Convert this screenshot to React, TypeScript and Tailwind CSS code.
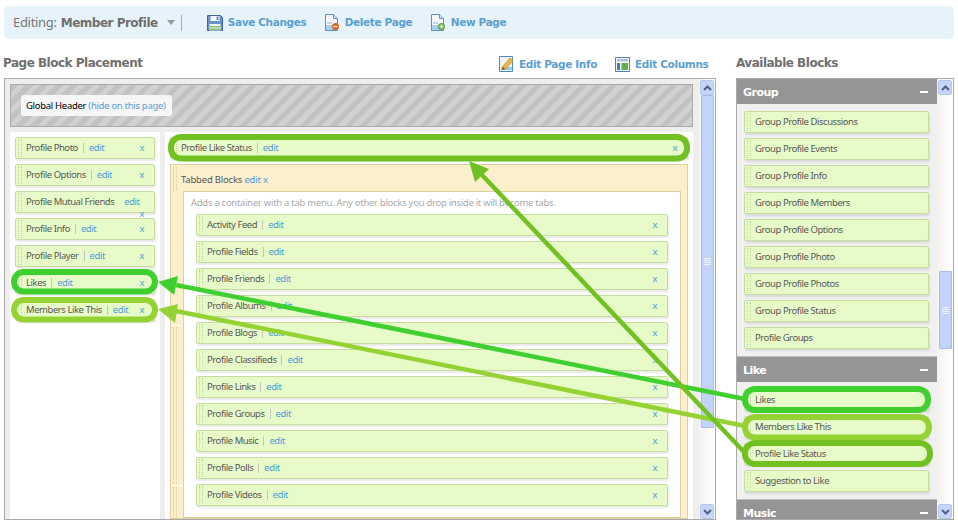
import React from "react";

const leftBlocks = ["Profile Photo", "Profile Options", "Profile Mutual Friends", "Profile Info", "Profile Player", "Likes", "Members Like This"];
const tabBlocks = ["Activity Feed", "Profile Fields", "Profile Friends", "Profile Albums", "Profile Blogs", "Profile Classifieds", "Profile Links", "Profile Groups", "Profile Music", "Profile Polls", "Profile Videos"];
const groupBlocks = ["Group Profile Discussions", "Group Profile Events", "Group Profile Info", "Group Profile Members", "Group Profile Options", "Group Profile Photo", "Group Profile Photos", "Group Profile Status", "Profile Groups"];
const likeBlocks = ["Likes", "Members Like This", "Profile Like Status", "Suggestion to Like"];

function Block({ name, lowX, noEdit }: { name: string; lowX?: boolean; noEdit?: boolean }) {
  return (
    <div className="flex h-[22px] shrink-0 items-center rounded-[2px] border border-[#c6dd9e] bg-[#e7fbc8] pl-[2px] pr-[10px] shadow-[1px_2px_2px_rgba(0,0,0,0.09)]">
      <div className="h-[18px] w-[4px] shrink-0 border-x border-dotted border-[#c3d6a0]" />
      <span className="mb-px ml-[4px] whitespace-nowrap text-[#585858]">{name}</span>
      {!noEdit && (
        <>
          <span className="ml-[5px] h-[10px] w-px bg-[#c4c4c4]" />
          <a className="mb-px ml-[5px] text-[#4f9bd9]">edit</a>
          <a className={lowX ? "mb-px ml-auto translate-y-[12px] text-[#4f9bd9]" : "mb-px ml-auto text-[#4f9bd9]"}>x</a>
        </>
      )}
    </div>
  );
}

function Scrollbar({ offset }: { offset: string }) {
  return (
    <div className="flex w-[16px] shrink-0 flex-col items-center bg-gradient-to-r from-[#f4f3ee] to-white pt-px">
      <ScrollButton up />
      <div className={offset + " flex w-[13px] items-center justify-center rounded-[1px] border border-[#a5bdec] bg-[#c3d4fc]"}>
        <svg width="7" height="7" viewBox="0 0 7 7">
          <path d="M0 .5h7M0 2.5h7M0 4.5h7M0 6.5h7" stroke="#eef3ff" strokeWidth="1" />
        </svg>
      </div>
      <div className="flex-1" />
      <ScrollButton />
    </div>
  );
}

function ScrollButton({ up }: { up?: boolean }) {
  return (
    <div className="flex h-[15px] w-[14px] shrink-0 items-center justify-center rounded-[2px] border border-[#b3c6ee] bg-[#c6d6fb]">
      <svg width="9" height="6" viewBox="0 0 9 6">
        <path d={up ? "M1 5l3.5-3.5L8 5" : "M1 1l3.5 3.5L8 1"} fill="none" stroke="#4d6185" strokeWidth="2" />
      </svg>
    </div>
  );
}

function GroupHeader({ title }: { title: string }) {
  return (
    <div className="flex h-[25px] shrink-0 items-center justify-between bg-[#959595] pl-[6px] pr-[9px] text-[11px] font-bold tracking-[-0.5px] text-white [font-family:'DejaVu_Sans',sans-serif]">
      <span className="mt-px">{title}</span>
      <span className="h-[2px] w-[8px] bg-white" />
    </div>
  );
}

function DocIcon({ badge }: { badge: "del" | "add" }) {
  return (
    <svg className="shrink-0" width="16" height="17" viewBox="0 0 16 17">
      <path d="M1.5.5h8l4 4v12h-12z" fill="#f4f8fd" stroke="#5f8fc9" />
      <path d="M9.5.5v4h4" fill="#cfe0f4" stroke="#5f8fc9" />
      <path d="M2 11h11v5H2z" fill="#a9cdee" />
      <path d="M3 9h5" stroke="#7fb0e0" />
      <circle cx="11.5" cy="12.5" r="3.5" fill={badge === "del" ? "#d9641c" : "#5aa83c"} />
      <path d={badge === "del" ? "M9.5 12.5h4" : "M9.5 12.5h4M11.5 10.5v4"} stroke="#fff" strokeWidth="1.3" />
    </svg>
  );
}

function SaveIcon() {
  return (
    <svg className="shrink-0" width="16" height="16" viewBox="0 0 16 16">
      <path d="M.5.5h13l2 2v13H.5z" fill="#6b92c8" stroke="#3f66a3" />
      <path d="M3.5 1h9v5h-9z" fill="#f2f6fb" />
      <path d="M9.5 1.5h2v3.5h-2z" fill="#6b92c8" />
      <path d="M2.5 9h11v6.500h-11z" fill="#eef3f8" />
      <path d="M3 11h10v1.500H3zM3 13.500h10V15H3z" fill="#8cbf76" />
    </svg>
  );
}

function PencilIcon() {
  return (
    <svg className="shrink-0" width="15" height="16" viewBox="0 0 15 16">
      <path d="M.5.5h13v15H.5z" fill="#eef5fc" stroke="#4f87c7" />
      <path d="M2 11h11v3H2z" fill="#9cc6ec" />
      <path d="M3 14l1-4 7-8 3 2.500-7 8z" fill="#f0b840" stroke="#b98428" strokeWidth=".7" />
      <path d="M3 14l1-3 2 1.500z" fill="#7a5a2a" />
    </svg>
  );
}

function ColumnsIcon() {
  return (
    <svg className="shrink-0" width="15" height="15" viewBox="0 0 15 15">
      <path d="M.5.5h14v14H.5z" fill="#f2f5f9" stroke="#5c7fa8" />
      <path d="M2 2h11v2.500H2z" fill="#a8c3e0" />
      <path d="M2 6h3v7H2z" fill="#3f78bb" />
      <path d="M6.500 6H13v7H6.500z" fill="#5db04a" />
    </svg>
  );
}

function ToolLink({ icon, label, w }: { icon: React.ReactNode; label: string; w: string }) {
  return (
    <a className={w + " flex shrink-0 items-center gap-[5px] whitespace-nowrap text-[10.5px] font-bold tracking-[-0.35px] text-[#5a9fcf] [font-family:'DejaVu_Sans',sans-serif]"}>
      {icon}
      <span>{label}</span>
    </a>
  );
}

// arrows and rings drawn over the page, like the annotations on the screenshot
function Annotations() {
  return (
    <svg className="pointer-events-none absolute left-0 top-0" width="958" height="525" viewBox="0 0 958 525">
      <g fill="none" strokeWidth="6">
        <rect x="171" y="137" width="516" height="21.500" rx="10" stroke="#72c122" />
        <rect x="14" y="272" width="141" height="19.500" rx="9.500" stroke="#3fd030" />
        <rect x="14" y="300" width="141" height="19.500" rx="9.500" stroke="#95d334" />
        <rect x="745" y="389" width="183" height="21" rx="10" stroke="#3fd030" />
        <rect x="745" y="417" width="184" height="20.500" rx="10" stroke="#95d334" />
        <rect x="745" y="443" width="185" height="21" rx="10" stroke="#72c122" />
      </g>
      <path d="M745 399L176 285" stroke="#3fd030" strokeWidth="4.500" />
      <path d="M158 282l20-6-4 19z" fill="#3fd030" />
      <path d="M745 426L176 311" stroke="#95d334" strokeWidth="4.500" />
      <path d="M158 309l20-5-3 19z" fill="#95d334" />
      <path d="M745 453L482 175" stroke="#72c122" strokeWidth="4.500" />
      <path d="M469 161l20 8-14 13z" fill="#72c122" />
    </svg>
  );
}

const heading = "text-[12px] font-bold tracking-[-0.5px] text-[#6f6f6f] [font-family:'DejaVu_Sans',sans-serif]";

export default function App() {
  return (
    <div className="relative h-[525px] w-[958px] overflow-hidden bg-white text-[9.5px] leading-none tracking-[-0.45px] text-[#666] [font-family:'Noto_Sans',sans-serif]">
      {/* Toolbar */}
      <div className="ml-[4px] mt-[6px] flex h-[33px] w-[950px] items-center rounded-[5px] bg-[#e7f3fa] pl-[9px]">
        <span className="text-[13px] tracking-[-0.3px] text-[#777]">Editing:</span>
        <span className={"ml-[4px] " + heading}>Member Profile</span>
        <span className="ml-[9px] h-0 w-0 border-x-[4px] border-t-[5px] border-x-transparent border-t-[#999]" />
        <span className="ml-[6px] h-[16px] w-px bg-[#aaa]" />
        <div className="ml-[25px] flex">
          <ToolLink w="w-[117px]" icon={<SaveIcon />} label="Save Changes" />
          <ToolLink w="w-[106px]" icon={<DocIcon badge="del" />} label="Delete Page" />
          <ToolLink w="w-[80px]" icon={<DocIcon badge="add" />} label="New Page" />
        </div>
      </div>

      <div className="mt-[13px] flex">
        {/* Page Block Placement */}
        <div className="ml-[3px] flex w-[713px] flex-col">
          <div className="flex h-[26px] items-start justify-between pr-[9px]">
            <h2 className={"mt-[5px] " + heading}>Page Block Placement</h2>
            <div className="mt-[4px] flex">
              <ToolLink w="w-[116px]" icon={<PencilIcon />} label="Edit Page Info" />
              <ToolLink w="w-[92px]" icon={<ColumnsIcon />} label="Edit Columns" />
            </div>
          </div>
          <div className="ml-px flex h-[442px] overflow-hidden border border-[#a9a9a9] bg-[#eee]">
            <div className="flex h-[440px] w-[694px] shrink-0 flex-col overflow-hidden pl-[5px] pr-[6px] pt-[5px]">
              <div className="flex h-[43px] shrink-0 items-center border border-[#aaa] bg-[repeating-linear-gradient(135deg,#c2c2c2_0,#c2c2c2_5px,#d1d1d1_5px,#d1d1d1_10.6px)] pl-[10px]">
                <div className="flex h-[21px] items-center rounded-[3px] bg-[#f6f6f6] pl-[5px] pr-[6px] tracking-[-0.3px] text-black">
                  Global Header&nbsp;<span className="text-[#5a9fcf]">(hide on this page)</span>
                </div>
              </div>
              <div className="mt-[5px] flex min-h-0 flex-1 gap-[5px]">
                <div className="flex w-[150px] shrink-0 flex-col gap-[5px] bg-white px-[5px] pt-[5px]">
                  {leftBlocks.map((name) => (
                    <Block key={name} name={name} lowX={name === "Profile Mutual Friends"} />
                  ))}
                </div>
                <div className="flex min-w-0 flex-1 flex-col bg-white pl-[5px] pr-[5px] pt-[5px]">
                  <Block name="Profile Like Status" />
                  <div className="relative mt-[5px] flex flex-1 flex-col border border-[#e0cf9b] bg-[#fcefcb] pl-[12px] pr-[6px]">
                    <div className="absolute left-[2px] top-[2px] h-[24px] w-[4px] border-x border-dotted border-[#e0cf9b]" />
                    <div className="absolute bottom-0 left-[2px] top-[162px] w-[4px] border-x border-dotted border-[#e0cf9b]" />
                    <div className="absolute left-0 top-[160px] h-px w-[12px] bg-white" />
                    <div className="absolute left-0 top-[320px] h-px w-[12px] bg-white" />
                    <div className="-ml-[2px] flex h-[26px] shrink-0 items-center pt-[4px] tracking-[-0.2px] text-[#585858]">
                      Tabbed Blocks&nbsp;<a className="text-[#4f9bd9]">edit x</a>
                    </div>
                    <div className="flex flex-1 flex-col border border-[#e0cf9b] bg-white px-[12px]">
                      <p className="-ml-[5px] flex h-[22px] shrink-0 items-center tracking-[-0.28px] text-[#aaa]">
                        Adds a container with a tab menu. Any other blocks you drop inside it will become tabs.
                      </p>
                      <div className="flex flex-col gap-[5px]">
                        {tabBlocks.map((name) => (
                          <Block key={name} name={name} />
                        ))}
                      </div>
                    </div>
                  </div>
                </div>
              </div>
            </div>
            <Scrollbar offset="h-[333px]" />
          </div>
        </div>

        {/* Available Blocks */}
        <div className="ml-[20px] flex w-[218px] flex-col">
          <h2 className={"mt-[5px] h-[21px] " + heading}>Available Blocks</h2>
          <div className="flex h-[442px] overflow-hidden border border-[#a9a9a9] bg-[#f0f0f0]">
            <div className="flex w-[200px] shrink-0 flex-col overflow-hidden">
              <GroupHeader title="Group" />
              <div className="flex shrink-0 flex-col gap-[5px] py-[7px] pl-[7px] pr-[8px]">
                {groupBlocks.map((name) => (
                  <Block key={name} name={name} noEdit />
                ))}
              </div>
              <div className="h-px shrink-0 bg-[#bbb]" />
              <GroupHeader title="Like" />
              <div className="flex shrink-0 flex-col gap-[5px] py-[7px] pl-[7px] pr-[8px]">
                {likeBlocks.map((name) => (
                  <Block key={name} name={name} noEdit />
                ))}
              </div>
              <div className="h-px shrink-0 bg-[#bbb]" />
              <GroupHeader title="Music" />
            </div>
            <Scrollbar offset="mt-[176px] h-[78px]" />
          </div>
        </div>
      </div>

      <Annotations />
    </div>
  );
}
